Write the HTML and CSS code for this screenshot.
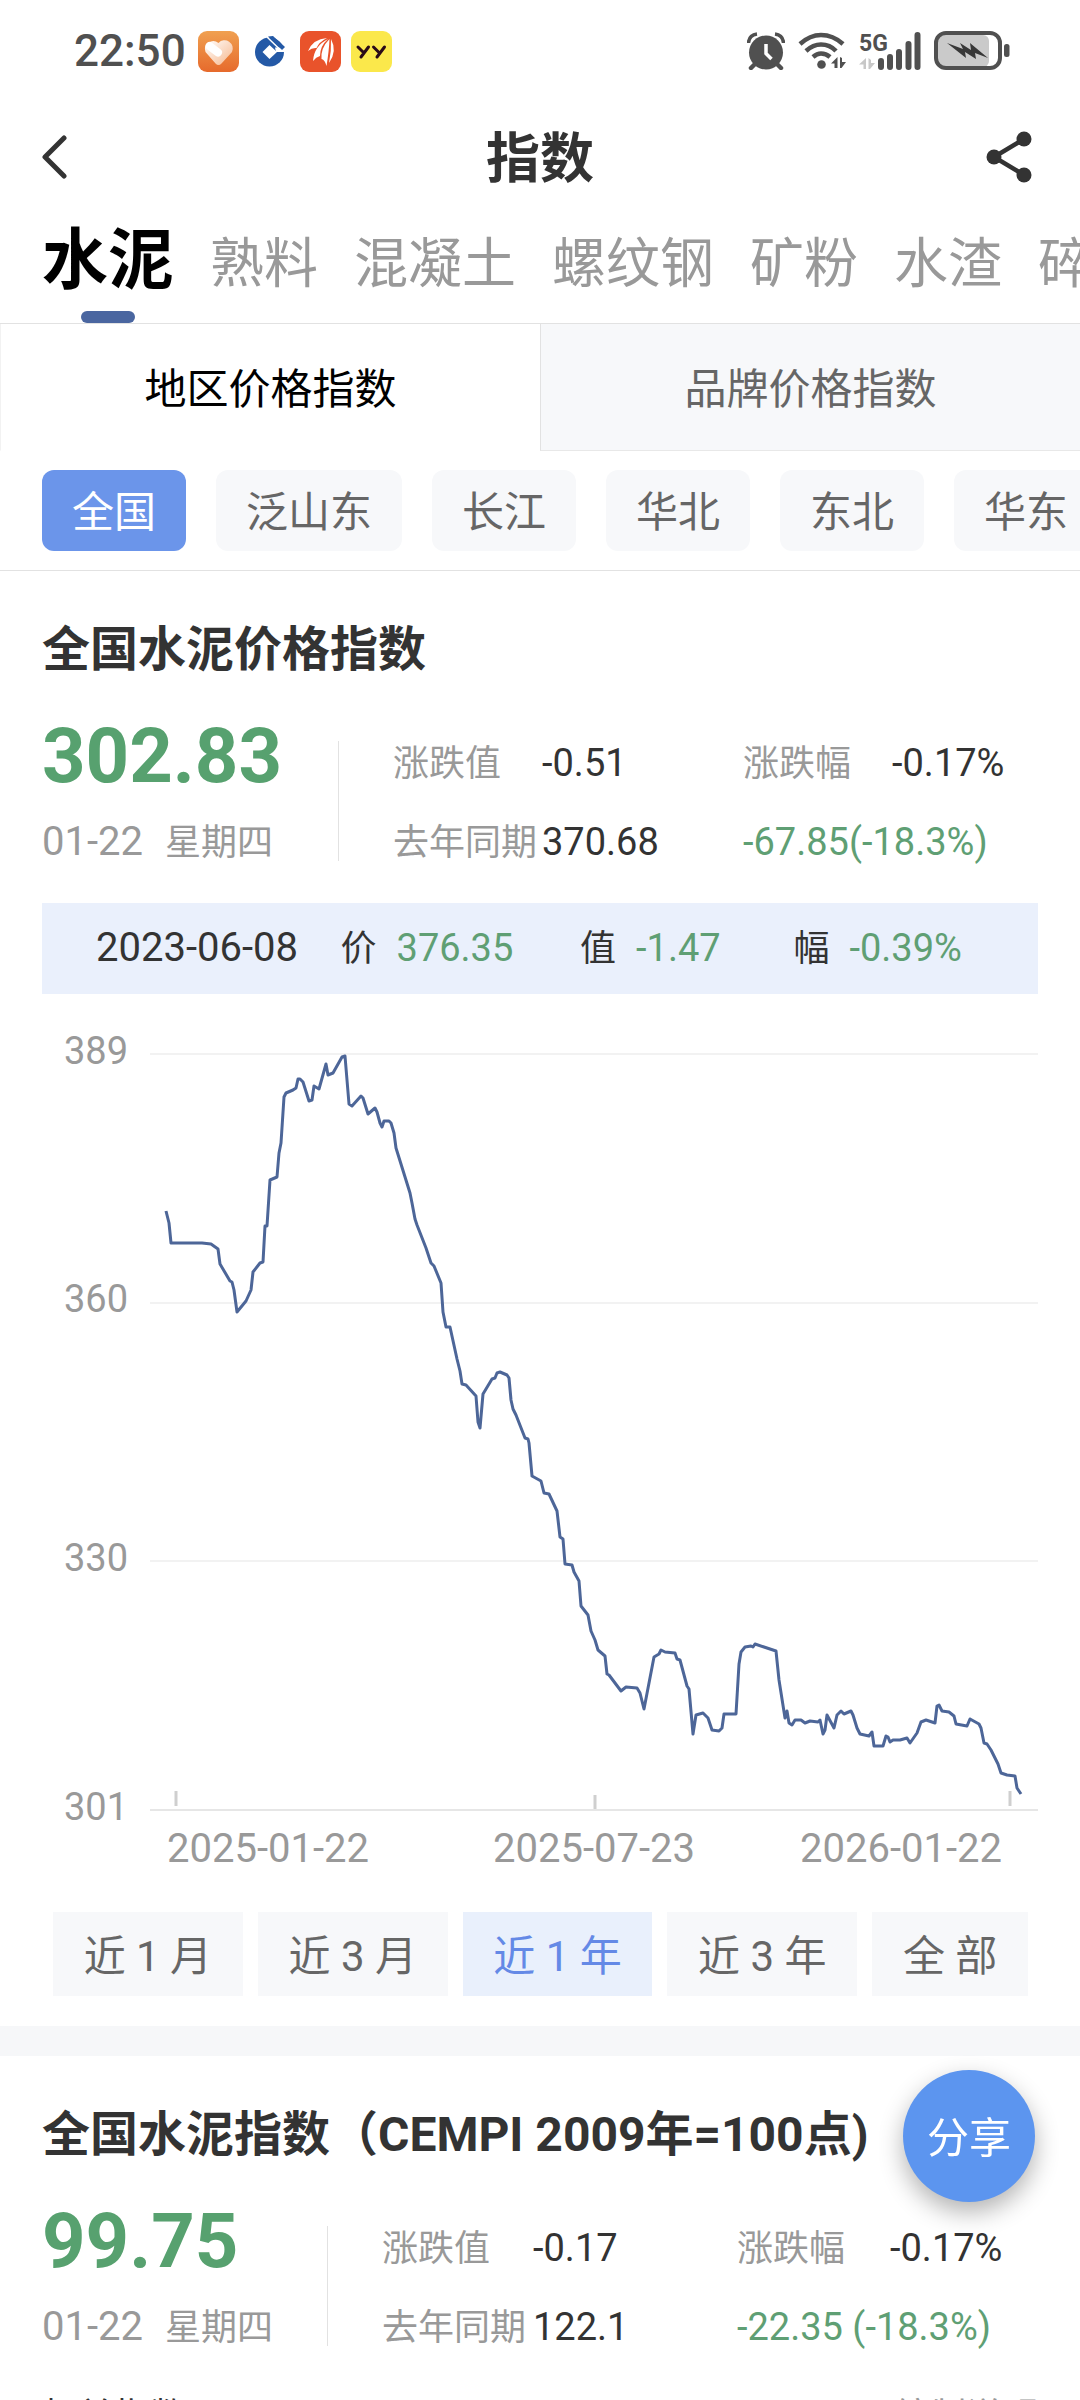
FILE: index.html
```html
<!DOCTYPE html>
<html lang="zh-CN">
<head>
    <meta charset="UTF-8">
    <meta name="viewport" content="width=device-width, initial-scale=1.0">
    <title>指数</title>
    <link rel="stylesheet" href="styles.css">
</head>
<body>

<div class="status-bar">
    <span class="clock">22:50</span>
    <div class="app-icons">
        <svg width="41" height="41" viewBox="0 0 41 41">
            <defs>
                <linearGradient id="heartBg" x1="0" y1="0" x2="0" y2="1">
                    <stop offset="0" stop-color="#f0a050"/>
                    <stop offset="1" stop-color="#e66a2c"/>
                </linearGradient>
                <linearGradient id="heartFill" x1="0" y1="0" x2="1" y2="1">
                    <stop offset="0" stop-color="#ffffff"/>
                    <stop offset="1" stop-color="#f6b78c"/>
                </linearGradient>
            </defs>
            <rect width="41" height="41" rx="9" fill="url(#heartBg)"/>
            <path d="M20.500 34 Q19 34 17.500 32.500 L7.500 21 A8.200 8.200 0 0 1 20.500 12 A8.200 8.200 0 0 1 34 21 L23.500 32.500 Q22 34 20.500 34 Z" fill="url(#heartFill)"/>
            <path d="M11.500 15 L20 21.500" stroke="#ffffff" stroke-width="8" stroke-linecap="round"/>
        </svg>
        <svg width="41" height="41" viewBox="0 0 41 41">
            <circle cx="20.500" cy="21" r="14.500" fill="#2459a6"/>
            <path d="M20.500 14 L28 21 L20.500 28 L13.500 21 Z" fill="#ffffff"/>
            <path d="M26 16.500 L36 16.500 V21 H27 Z" fill="#ffffff"/>
            <path d="M24 5 L36 16 L33 19 L19 5.500 Z" fill="#2459a6"/>
            <path d="M18 6 L32 19.500" stroke="#ffffff" stroke-width="1.500"/>
        </svg>
        <svg width="41" height="41" viewBox="0 0 41 41">
            <rect width="41" height="41" rx="9" fill="#e9532b"/>
            <g fill="#ffffff">
                <path d="M27 7 Q13 8 8 20 Q12 16.500 16.500 17 Q19 11 27 7 Z"/>
                <path d="M28 8 Q14 15 13 30 Q16 26 20 25 Q20 15 28 8 Z"/>
                <path d="M29.500 8 Q20.500 17 21.500 28 Q25 29 26.500 35 Q29 20 29.500 8 Z"/>
                <path d="M31 8 Q31.500 20 29 32 Q37.500 20 31 8 Z"/>
            </g>
        </svg>
        <svg width="41" height="41" viewBox="0 0 41 41">
            <rect width="41" height="41" rx="9" fill="#fbe84b"/>
            <path d="M7 16 L12.500 21.500 M17.500 16 L10 26 M22.500 16 L28 21.500 M33.500 16 L26 26" fill="none" stroke="#2a0a18" stroke-width="3" stroke-linecap="round"/>
        </svg>
    </div>
    <div class="system-icons">
        <svg width="38" height="38" viewBox="0 0 38 38">
            <circle cx="19" cy="20.500" r="17" fill="#505050"/>
            <path d="M1.500 11 Q2 3 10 2 M36.500 11 Q36 3 28 2" fill="none" stroke="#505050" stroke-width="3.500"/>
            <path d="M8 32 L4 36 M30 32 L34 36" stroke="#505050" stroke-width="4.500" stroke-linecap="round"/>
            <path d="M19 12 V21.500 L24.500 27" fill="none" stroke="#ffffff" stroke-width="3.500"/>
        </svg>
        <svg width="48" height="38" viewBox="0 0 48 38">
            <g fill="none" stroke="#505050" stroke-width="4.500">
                <path d="M2 12 Q12 3 23 3 Q35 3 45 12"/>
                <path d="M8 19 Q15 12.500 23 12.500 Q32 12.500 38 19"/>
                <path d="M15 25 Q19 21.500 23 21.500 Q28 21.500 32 25"/>
            </g>
            <circle cx="23.500" cy="32.500" r="4.300" fill="#505050"/>
            <path d="M39.500 25 V36 H36.500 V31.500 H33 Z M42 36 V25 L44 26 V30 H48 L43.500 36 Z" fill="#505050"/>
        </svg>
        <svg class="network" width="62" height="40" viewBox="0 0 62 40">
            <text x="0" y="20">5G</text>
            <path d="M7 27 V38 H4.500 V33.500 H0 Z M9.500 38 V27 L12 29 V32 H16 L11 38 Z" fill="#c8c8c8"/>
            <path d="M22 30 V36 M31 26 V36 M40 21 V36 M49.500 13 V36 M58.500 4 V36" stroke="#505050" stroke-width="6" stroke-linecap="round"/>
        </svg>
        <svg width="76" height="40" viewBox="0 0 76 40">
            <rect x="4" y="4" width="51" height="32" rx="6" fill="#cacaca"/>
            <rect x="2" y="2" width="64" height="35" rx="10" fill="none" stroke="#505050" stroke-width="4"/>
            <rect x="70" y="13" width="5.500" height="13" rx="2.500" fill="#505050"/>
            <path d="M13 12 L29 18 L26 12 L37 19 L36 12 L54 27 L41 22 L42 28 L31 21 L32 27 Z" fill="#383838"/>
        </svg>
    </div>
</div>

<header class="title-bar">
    <button type="button" class="icon-button" aria-label="返回">
        <svg width="26" height="46" viewBox="0 0 26 46">
            <path d="M22 4 L3 23 L22 42" fill="none" stroke="#333333" stroke-width="5" stroke-linecap="round" stroke-linejoin="round"/>
        </svg>
    </button>
    <h1>指数</h1>
    <button type="button" class="icon-button" aria-label="分享">
        <svg width="46" height="52" viewBox="0 0 46 52">
            <path d="M38 8 L8 26 L38 44" fill="none" stroke="#333333" stroke-width="4.500"/>
            <g fill="#333333">
                <circle cx="38" cy="8" r="7.500"/>
                <circle cx="8" cy="26" r="7.500"/>
                <circle cx="38" cy="44" r="7.500"/>
            </g>
        </svg>
    </button>
</header>

<nav class="product-tabs">
    <button type="button" class="active">水泥</button>
    <button type="button">熟料</button>
    <button type="button">混凝土</button>
    <button type="button">螺纹钢</button>
    <button type="button">矿粉</button>
    <button type="button">水渣</button>
    <button type="button">碎石</button>
</nav>

<div class="type-tabs">
    <button type="button" class="active">地区价格指数</button>
    <button type="button">品牌价格指数</button>
</div>

<div class="regions">
    <button type="button" class="active">全国</button>
    <button type="button">泛山东</button>
    <button type="button">长江</button>
    <button type="button">华北</button>
    <button type="button">东北</button>
    <button type="button">华东</button>
</div>

<section class="index-card">
    <h2>全国水泥价格指数</h2>
    <div class="summary">
        <div class="current">
            <strong>302.83</strong>
            <div class="date"><span class="num">01-22</span><span>星期四</span></div>
        </div>
        <div class="stats">
            <span class="label">涨跌值</span>
            <span>-0.51</span>
            <span class="label">涨跌幅</span>
            <span>-0.17%</span>
            <span class="label">去年同期</span>
            <span>370.68</span>
            <span class="wide down">-67.85(-18.3%)</span>
        </div>
    </div>

    <div class="point-info">
        <span class="day">2023-06-08</span>
        <span><b>价</b><em>376.35</em></span>
        <span><b>值</b><em>-1.47</em></span>
        <span><b>幅</b><em>-0.39%</em></span>
    </div>

    <svg class="chart" viewBox="0 0 996 850" role="img" aria-label="全国水泥价格指数近1年走势">
        <g class="grid">
            <path d="M108 33 H996 M108 282 H996 M108 540 H996"/>
            <path class="axis" d="M108 789 H996"/>
            <path class="tick" d="M134 770 V785 M553 774 V788 M968 770 V785"/>
        </g>
        <g class="axis-text">
            <text x="22" y="43">389</text>
            <text x="22" y="291">360</text>
            <text x="22" y="550">330</text>
            <text x="22" y="799">301</text>
        </g>
        <g class="axis-text dates">
            <text x="226" y="841">2025-01-22</text>
            <text x="552" y="841">2025-07-23</text>
            <text x="859" y="841">2026-01-22</text>
        </g>
        <g transform="translate(108 33)">
            <polyline class="line" points="16,157 19,169 21,189 52,189 61,190 68,195 70,210 80,227 82,228 84,236 87,258 96,247 101,236 103,218 110,209 113,208 115,172 117,172 120,126 127,123 129,99 131,89 134,43 136,39 143,36 146,34 148,25 150,25 153,28 159,47 162,46 164,32 169,35 176,10 178,21 183,19 192,3 195,2 199,50 202,52 211,42 213,44 218,60 225,54 227,58 230,69 232,73 234,67 239,67 241,69 244,79 246,94 260,139 262,149 265,165 267,171 276,194 281,209 284,212 291,229 293,258 296,273 300,273 307,305 310,317 312,330 316,331 326,342 328,368 330,374 333,340 342,325 345,324 347,319 350,318 357,321 359,324 361,346 363,355 366,361 375,384 378,385 379,389 382,422 391,427 394,439 399,440 407,457 410,483 413,485 415,510 422,511 424,518 429,527 431,552 438,561 441,577 445,586 448,596 455,602 457,620 459,621 471,637 476,633 487,634 490,639 494,655 504,603 509,600 511,596 515,598 525,599 527,605 530,606 537,632 539,635 543,680 546,661 553,659 558,664 562,676 569,677 572,674 574,660 586,660 589,610 591,598 595,593 601,592 603,593 605,590 614,593 626,597 629,626 635,664 637,657 639,669 642,671 645,666 651,666 655,669 660,667 668,668 670,666 673,680 675,676 677,661 684,674 687,661 691,657 694,660 701,657 703,661 707,674 710,680 719,682 722,678 724,692 733,692 736,682 738,683 740,688 743,686 750,686 757,684 760,689 767,679 771,668 776,666 785,669 787,652 789,651 792,657 799,658 804,662 806,670 817,672 820,665 829,670 831,674 834,689 837,690 841,696 848,710 851,719 857,721 865,722 867,734 871,740"/>
        </g>
    </svg>

    <div class="ranges">
        <button type="button">近 1 月</button>
        <button type="button">近 3 月</button>
        <button type="button" class="active">近 1 年</button>
        <button type="button">近 3 年</button>
        <button type="button">全 部</button>
    </div>
</section>

<section class="index-card">
    <h2>全国水泥指数（CEMPI 2009年=100点)</h2>
    <div class="summary compact">
        <div class="current">
            <strong>99.75</strong>
            <div class="date"><span class="num">01-22</span><span>星期四</span></div>
        </div>
        <div class="stats">
            <span class="label">涨跌值</span>
            <span>-0.17</span>
            <span class="label">涨跌幅</span>
            <span>-0.17%</span>
            <span class="label">去年同期</span>
            <span>122.1</span>
            <span class="wide down">-22.35 (-18.3%)</span>
        </div>
    </div>
    <div class="more">
        <span>相关指数</span>
        <a href="#">编制说明</a>
    </div>
</section>

<button type="button" class="share-float">分享</button>

</body>
</html>
```
FILE: styles.css
```css
* {
    box-sizing: border-box;
}

body, h1, h2, button {
    margin: 0;
    padding: 0;
    font-family: Roboto, "Noto Sans CJK SC", sans-serif;
}

body {
    height: 100vh;
    overflow: hidden;
    background-color: #ffffff;
    color: #333333;
}

button {
    border: none;
    background: none;
    color: #666666;
    font-size: 42px;
    white-space: nowrap;
    cursor: pointer;
}

svg {
    display: block;
}

/* status bar */
.status-bar {
    display: flex;
    align-items: center;
    height: 102px;
    padding: 0 70px 0 74px;
}

.clock {
    margin-right: 12px;
    color: #505050;
    font-size: 44px;
    font-weight: 500;
}

.app-icons {
    display: flex;
    gap: 10px;
}

.system-icons {
    display: flex;
    align-items: center;
    gap: 13px;
    margin-left: auto;
}

.network {
    overflow: visible;
    fill: #505050;
    font-size: 23px;
    font-weight: 700;
}

/* title bar */
.title-bar {
    display: flex;
    align-items: center;
    justify-content: space-between;
    height: 110px;
    padding: 0 42px;
}

.title-bar h1 {
    padding-top: 6px;
    font-size: 54px;
    line-height: 80px;
}

.icon-button {
    display: flex;
    width: 52px;
}

/* product tabs */
.product-tabs {
    display: flex;
    align-items: baseline;
    gap: 36px;
    height: 111px;
    padding: 1px 0 0 42px;
    overflow: hidden;
}

.product-tabs button {
    flex: none;
    color: #999999;
    font-size: 54px;
    line-height: 96px;
}

.product-tabs .active {
    position: relative;
    height: 110px;
    padding-bottom: 14px;
    color: #000000;
    font-size: 66px;
    font-weight: 700;
}

.product-tabs .active::after {
    content: "";
    position: absolute;
    left: 50%;
    bottom: 0;
    width: 54px;
    height: 12px;
    margin-left: -27px;
    border-radius: 6px;
    background-color: #4a66a0;
}

/* region / brand switch */
.type-tabs {
    display: flex;
    border-top: 1px solid #e2e2e2;
}

.type-tabs button {
    flex: 1;
    height: 127px;
    padding-bottom: 4px;
    border-left: 1px solid #e2e2e2;
    border-bottom: 1px solid #e8e8e8;
    background-color: #f7f8fa;
}

.type-tabs .active {
    border-color: #f2f2f2;
    border-bottom-color: #ffffff;
    background-color: #ffffff;
    color: #000000;
}

.regions {
    display: flex;
    gap: 30px;
    padding: 19px 0 19px 42px;
    border-bottom: 1px solid #e2e2e2;
    overflow: hidden;
}

.regions button {
    flex: none;
    height: 81px;
    padding: 0 30px 4px;
    border-radius: 12px;
    background-color: #f7f8fa;
}

.regions .active {
    background-color: #6b95ea;
    color: #ffffff;
}

/* index cards */
.index-card {
    padding: 43px 42px 30px;
}

.index-card + .index-card {
    border-top: 30px solid #f6f7f9;
}

h2 {
    font-size: 48px;
    line-height: 72px;
    white-space: nowrap;
}

.summary {
    display: flex;
    align-items: flex-end;
    margin-top: 30px;
}

.current {
    display: flex;
    flex-direction: column;
    gap: 22px;
    width: 296px;
}

.compact .current {
    width: 285px;
}

.current strong {
    color: #57a16f;
    font-size: 76px;
    line-height: 80px;
}

.date {
    display: flex;
    align-items: baseline;
    gap: 22px;
    color: #999999;
    font-size: 36px;
    line-height: 48px;
}

.num {
    font-size: 40px;
}

.stats {
    flex: 1;
    display: grid;
    grid-template-columns: 149px 201px 149px auto;
    row-gap: 30px;
    align-items: baseline;
    padding-left: 55px;
    font-size: 38px;
    line-height: 48px;
    white-space: nowrap;
    background: linear-gradient(#e2e2e2, #e2e2e2) no-repeat left 2px / 1px 120px;
}

.compact .stats {
    grid-template-columns: 151px 204px 153px auto;
}

.label {
    color: #999999;
    font-size: 36px;
}

.wide {
    grid-column: span 2;
}

.down {
    color: #5f9f74;
}

.point-info {
    display: grid;
    grid-template-columns: 244fr 239fr 213fr 244fr;
    align-items: baseline;
    margin-top: 36px;
    padding-left: 54px;
    background-color: #eaf0fc;
    font-size: 38px;
    line-height: 89px;
}

.point-info .day {
    font-size: 40px;
}

.point-info b {
    margin-right: 20px;
    font-size: 36px;
    font-weight: 400;
}

.point-info em {
    color: #5f9f74;
    font-style: normal;
}

/* chart */
.chart {
    width: 100%;
    height: auto;
    margin-top: 27px;
    overflow: visible;
}

.grid {
    fill: none;
    stroke: #f2f2f2;
    stroke-width: 2;
}

.axis {
    stroke: #e6e6e6;
}

.tick {
    stroke: #cfcfcf;
    stroke-width: 3;
}

.axis-text {
    fill: #999999;
    font-size: 38px;
}

.dates {
    font-size: 40px;
    text-anchor: middle;
}

.line {
    fill: none;
    stroke: #4d6698;
    stroke-width: 3;
    stroke-linejoin: round;
}

.ranges {
    display: flex;
    gap: 15px;
    margin-top: 41px;
    padding: 0 10px 0 11px;
}

.ranges button {
    flex: 1 1 auto;
    height: 84px;
    padding: 0 30px 4px;
    background-color: #f7f8fa;
}

.ranges .active {
    background-color: #e9f0fc;
    color: #6489e6;
}

.more {
    display: flex;
    justify-content: space-between;
    margin-top: 41px;
    font-size: 36px;
    line-height: 48px;
}

.more a {
    color: #999999;
    text-decoration: none;
}

.share-float {
    position: fixed;
    right: 45px;
    bottom: 198px;
    width: 132px;
    height: 132px;
    padding-bottom: 4px;
    border-radius: 50%;
    background-color: #5c95ef;
    color: #ffffff;
    box-shadow: 0 10px 24px rgba(0, 0, 0, 0.3);
}
```
